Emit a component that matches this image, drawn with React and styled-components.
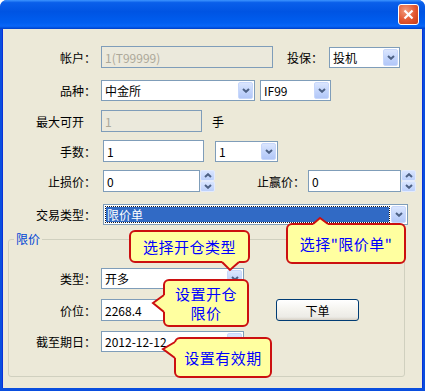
import React from "react";
import styled, { createGlobalStyle } from "styled-components";

const GlobalStyle = createGlobalStyle`
  html, body { margin: 0; padding: 0; background: #fff; }
  body {
    font-family: "Noto Sans CJK SC", "Liberation Sans", sans-serif;
    font-size: 12px;
  }
`;

const Window = styled.div`
  position: relative;
  width: 425px;
  height: 391px;
  display: flex;
  flex-direction: column;
  border-radius: 7px 7px 0 0;
  overflow: hidden;
  background: #0a4ede;
`;

const TitleBar = styled.div`
  flex: none;
  height: 29px;
  display: flex;
  align-items: center;
  justify-content: flex-end;
  padding-right: 6px;
  background: linear-gradient(
    180deg,
    #3d95ff 0%,
    #0a5fea 9%,
    #0054e3 40%,
    #005ef0 78%,
    #0866f8 90%,
    #0050dd 96%,
    #003dc8 100%
  );
`;

const CloseButton = styled.div`
  width: 21px;
  height: 21px;
  box-sizing: border-box;
  border: 1px solid #fff;
  border-radius: 3px;
  background: radial-gradient(circle at 35% 30%, #f29b7c 0%, #e2562f 55%, #c43c16 100%);
  display: flex;
  align-items: center;
  justify-content: center;
`;

const Frame = styled.div`
  flex: 1;
  display: flex;
  padding: 0 3px 3px 3px;
  background: #0a4ede;
`;

const Body = styled.div`
  flex: 1;
  display: flex;
  flex-direction: column;
  padding-top: 17px;
  background: #ece9d8;
  border-left: 1px solid #0831d9;
  border-right: 1px solid #0831d9;
  margin: 0 -1px;
`;

const Row = styled.div`
  flex: none;
  display: flex;
  align-items: center;
  height: 22px;
  margin-top: ${(p) => p.$mt || 0}px;
`;

const Label = styled.span`
  flex: none;
  box-sizing: border-box;
  width: ${(p) => (p.$w ? `${p.$w}px` : "auto")};
  margin-left: ${(p) => p.$ml || 0}px;
  padding-right: ${(p) => p.$pr || 0}px;
  text-align: right;
  white-space: nowrap;
  color: #000;
`;

const TextBox = styled.div`
  flex: none;
  box-sizing: border-box;
  width: ${(p) => p.$w}px;
  height: 22px;
  margin-left: ${(p) => p.$ml || 0}px;
  padding: 0 3px;
  display: flex;
  align-items: center;
  border: 1px solid #7f9db9;
  background: ${(p) => (p.$disabled ? "#ebe9dc" : "#fff")};
  color: ${(p) => (p.$disabled ? "#aca899" : "#000")};
  white-space: nowrap;
  overflow: hidden;
`;

const Combo = styled.div`
  flex: none;
  box-sizing: border-box;
  width: ${(p) => p.$w}px;
  height: 21px;
  margin-left: ${(p) => p.$ml || 0}px;
  display: flex;
  align-items: center;
  border: 1px solid #7f9db9;
  background: #fff;
`;

const ComboText = styled.span`
  flex: 1;
  min-width: 0;
  padding-left: 3px;
  white-space: nowrap;
  overflow: hidden;
`;

const ComboSelected = styled.span`
  flex: 1;
  align-self: stretch;
  margin: 2px 2px 2px 2px;
  padding-left: 1px;
  display: flex;
  align-items: center;
  background: #316ac5;
  color: #fff;
  outline: 1px dotted #1a1a1a;
  outline-offset: 0;
`;

const ArrowButton = styled.span`
  flex: none;
  box-sizing: border-box;
  width: 15px;
  height: 17px;
  margin-right: 1px;
  display: flex;
  align-items: center;
  justify-content: center;
  border: 1px solid #c7d7fb;
  border-radius: 2px;
  background: linear-gradient(180deg, #dbe6fe 0%, #c2d4fb 55%, #b2c7f8 100%);
`;

const SpinBox = styled.div`
  flex: none;
  display: flex;
  flex-direction: column;
  width: 15px;
  height: 22px;
`;

const SpinHalf = styled.span`
  flex: 1;
  box-sizing: border-box;
  display: flex;
  align-items: center;
  justify-content: center;
  border: 1px solid #e3ebfd;
  border-radius: 2px;
  background: linear-gradient(180deg, #d8e4fe 0%, #bcd0fb 100%);
`;

const Unit = styled.span`
  flex: none;
  margin-left: ${(p) => p.$ml || 0}px;
`;

const Group = styled.fieldset`
  flex: none;
  margin: 7px 17px 10px 5px;
  padding: 0 0 24px 0;
  min-width: 0;
  border: 1px solid #d0d0bf;
  border-radius: 3px;
`;

const Legend = styled.legend`
  margin-left: 5px;
  padding: 0 2px;
  line-height: 14px;
  color: #0046d5;
`;

const PushButton = styled.div`
  flex: none;
  box-sizing: border-box;
  width: 83px;
  height: 22px;
  margin-left: ${(p) => p.$ml || 0}px;
  display: flex;
  align-items: center;
  justify-content: center;
  border: 1px solid #003c74;
  border-radius: 3px;
  background: linear-gradient(180deg, #ffffff 0%, #f4f3ee 50%, #ecebe6 85%, #d6d0c5 100%);
  color: #000;
`;

const Bubble = styled.div`
  position: absolute;
  left: ${(p) => p.$x}px;
  top: ${(p) => p.$y}px;
  width: ${(p) => p.$w}px;
  height: ${(p) => p.$h}px;
  box-sizing: border-box;
  display: flex;
  align-items: center;
  justify-content: center;
  text-align: center;
  border: 2px solid #cc1010;
  border-radius: 6px;
  background: #ffffa0;
  color: #0000ff;
  font-size: 15px;
  line-height: 19px;
  letter-spacing: 0.5px;
  white-space: nowrap;
`;

const TailSvg = styled.svg`
  position: absolute;
  left: -2px;
  top: -2px;
  overflow: visible;
  pointer-events: none;
`;

function Tail({ w, h, pts, inward }) {
  const [a, t, b] = pts;
  const [dx, dy] = inward;
  const area = `${a[0] + dx},${a[1] + dy} ${a[0]},${a[1]} ${t[0]},${t[1]} ${b[0]},${b[1]} ${b[0] + dx},${b[1] + dy}`;
  return (
    <TailSvg width={w} height={h}>
      <polygon points={area} fill="#ffffa0" />
      <polyline
        points={`${a[0]},${a[1]} ${t[0]},${t[1]} ${b[0]},${b[1]}`}
        fill="none"
        stroke="#cc1010"
        strokeWidth="2"
      />
    </TailSvg>
  );
}

function Callout({ x, y, w, h, tail, inward, children }) {
  return (
    <Bubble $x={x} $y={y} $w={w} $h={h}>
      <span>{children}</span>
      <Tail w={w} h={h} pts={tail} inward={inward} />
    </Bubble>
  );
}

const Chevron = ({ up }) => (
  <svg width="8" height="5" viewBox="0 0 8 5">
    <path
      d={up ? "M1,4 L4,1.2 L7,4" : "M1,1 L4,3.8 L7,1"}
      fill="none"
      stroke="#4d6185"
      strokeWidth="2"
    />
  </svg>
);

const Select = ({ w, ml, value, selected }) => (
  <Combo $w={w} $ml={ml}>
    {selected ? <ComboSelected>{value}</ComboSelected> : <ComboText>{value}</ComboText>}
    <ArrowButton>
      <Chevron />
    </ArrowButton>
  </Combo>
);

const Spinner = ({ w, ml, value }) => (
  <>
    <TextBox $w={w} $ml={ml}>{value}</TextBox>
    <SpinBox>
      <SpinHalf>
        <Chevron up />
      </SpinHalf>
      <SpinHalf>
        <Chevron />
      </SpinHalf>
    </SpinBox>
  </>
);

export default function App() {
  return (
    <>
      <GlobalStyle />
      <Window>
        <TitleBar>
          <CloseButton>
            <svg width="11" height="11" viewBox="0 0 11 11">
              <path d="M1.5,1.5 L9.5,9.5 M9.5,1.5 L1.5,9.5" stroke="#fff" strokeWidth="2.2" />
            </svg>
          </CloseButton>
        </TitleBar>
        <Frame>
          <Body>
            <Row>
              <Label $w={93}>帐户：</Label>
              <TextBox $w={172} $ml={5} $disabled>1(T99999)</TextBox>
              <Label $ml={14}>投保：</Label>
              <Select w={71} ml={6} value="投机" />
            </Row>
            <Row $mt={11}>
              <Label $w={93}>品种：</Label>
              <Select w={154} ml={5} value="中金所" />
              <Select w={71} ml={5} value="IF99" />
            </Row>
            <Row $mt={9}>
              <Label $w={93} $pr={12}>最大可开</Label>
              <TextBox $w={101} $ml={5} $disabled>1</TextBox>
              <Unit $ml={10}>手</Unit>
            </Row>
            <Row $mt={8}>
              <Label $w={93}>手数：</Label>
              <TextBox $w={101} $ml={7}>1</TextBox>
              <Select w={63} ml={11} value="1" />
            </Row>
            <Row $mt={8}>
              <Label $w={93}>止损价：</Label>
              <Spinner w={97} ml={7} value="0" />
              <Label $ml={42}>止赢价：</Label>
              <Spinner w={93} ml={3} value="0" />
            </Row>
            <Row $mt={11}>
              <Label $w={93}>交易类型：</Label>
              <Select w={305} ml={7} value="限价单" selected />
            </Row>
            <Group>
              <Legend>限价</Legend>
              <Row $mt={21}>
                <Label $w={87}>类型：</Label>
                <Select w={143} ml={5} value="开多" />
              </Row>
              <Row $mt={10}>
                <Label $w={87}>价位：</Label>
                <TextBox $w={143} $ml={5}>2268.4</TextBox>
                <PushButton $ml={32}>下单</PushButton>
              </Row>
              <Row $mt={9}>
                <Label $w={87}>截至期日：</Label>
                <Select w={143} ml={5} value="2012-12-12" />
              </Row>
            </Group>
          </Body>
        </Frame>

        <Callout x={286} y={223} w={120} h={41} tail={[[27, 1], [34, -5], [42, 1]]} inward={[0, 3]}>
          选择"限价单"
        </Callout>
        <Callout x={129} y={230} w={121} h={33} tail={[[93, 32], [101, 40], [110, 32]]} inward={[0, -3]}>
          选择开仓类型
        </Callout>
        <Callout x={163} y={279} w={86} h={48} tail={[[1, 16], [-10, 24], [1, 33]]} inward={[3, 0]}>
          设置开仓
          <br />
          限价
        </Callout>
        <Callout x={174} y={337} w={98} h={41} tail={[[1, 5], [-11, 12], [1, 21]]} inward={[3, 0]}>
          设置有效期
        </Callout>
      </Window>
    </>
  );
}
